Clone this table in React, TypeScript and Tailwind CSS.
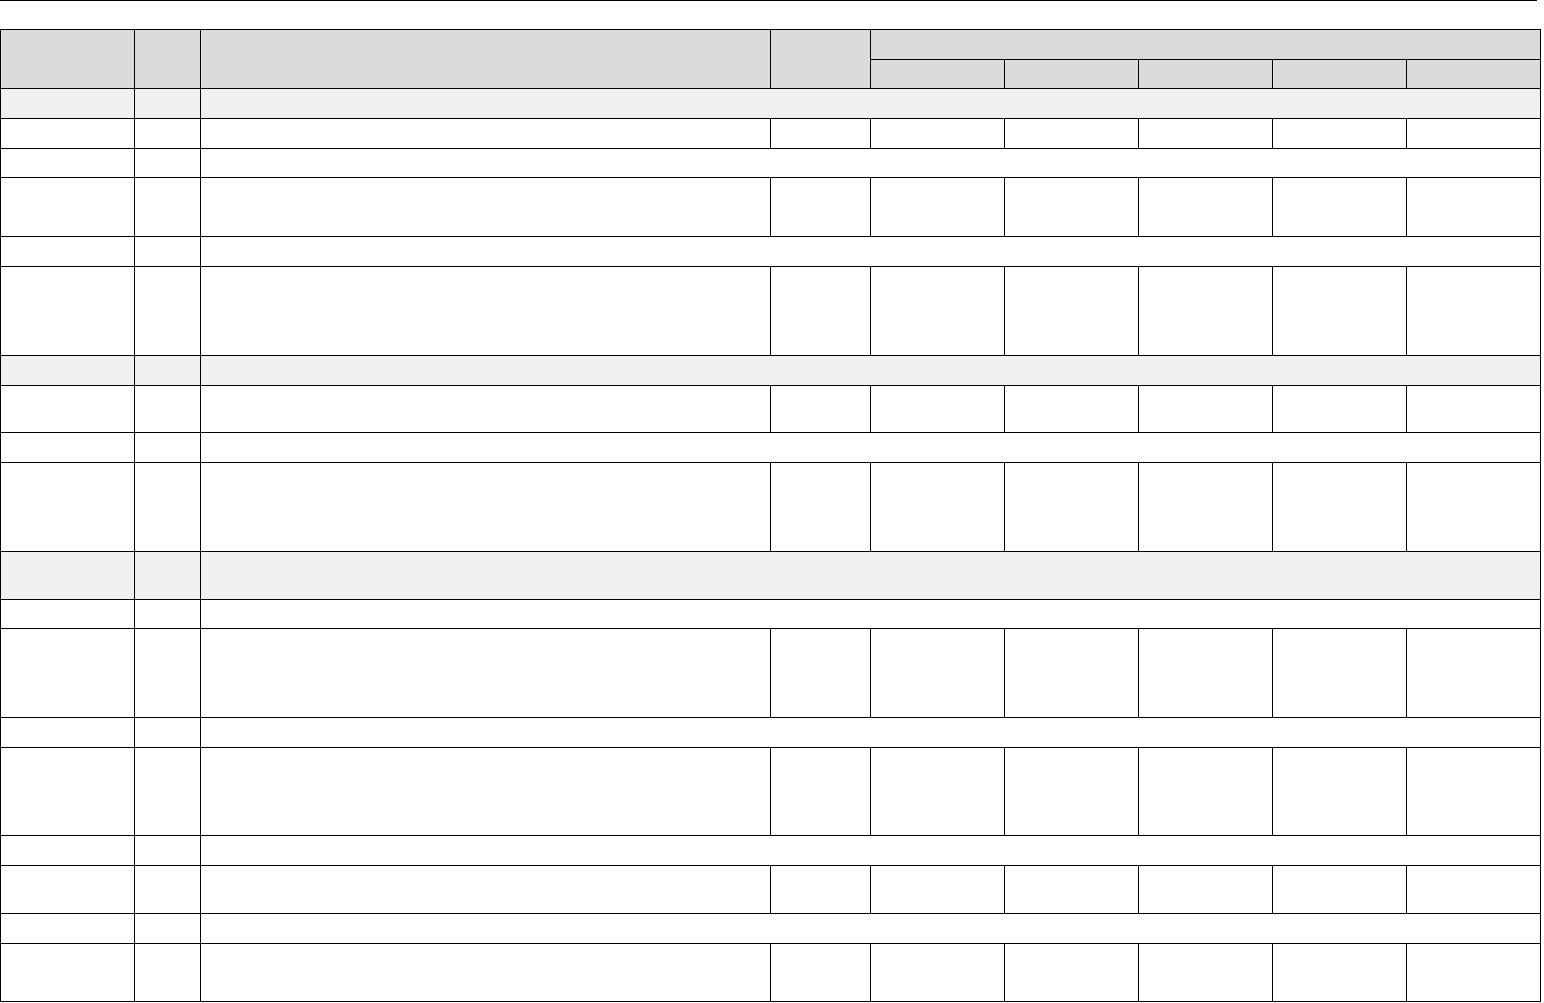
import React from "react";

type Row = { kind: "section" | "sub" | "data"; h: number };

const rows: Row[] = [
  { kind: "section", h: 29 },
  { kind: "data", h: 29 },
  { kind: "sub", h: 28 },
  { kind: "data", h: 58 },
  { kind: "sub", h: 29 },
  { kind: "data", h: 88 },
  { kind: "section", h: 29 },
  { kind: "data", h: 46 },
  { kind: "sub", h: 29 },
  { kind: "data", h: 88 },
  { kind: "section", h: 47 },
  { kind: "sub", h: 28 },
  { kind: "data", h: 88 },
  { kind: "sub", h: 29 },
  { kind: "data", h: 87 },
  { kind: "sub", h: 29 },
  { kind: "data", h: 47 },
  { kind: "sub", h: 29 },
  { kind: "data", h: 57 },
];

export default function App() {
  const rowTemplate = ["29px", "28px", ...rows.map((r) => `${r.h}px`)].join(" ");
  return (
    <div className="bg-white min-h-screen w-[1544px] font-['Liberation_Sans',sans-serif] text-sm text-black">
      <div className="w-[1537px] border-t border-black h-[29px]" />
      <div
        className="grid w-[1541px] gap-px bg-black p-px grid-cols-[133px_65px_569px_99px_133px_133px_133px_133px_133px]"
        style={{ gridTemplateRows: rowTemplate }}
      >
        <div className="row-span-2 bg-[#dbdbdb]" />
        <div className="row-span-2 bg-[#dbdbdb]" />
        <div className="row-span-2 bg-[#dbdbdb]" />
        <div className="row-span-2 bg-[#dbdbdb]" />
        <div className="col-span-5 bg-[#dbdbdb]" />
        <div className="bg-[#dbdbdb]" />
        <div className="bg-[#dbdbdb]" />
        <div className="bg-[#dbdbdb]" />
        <div className="bg-[#dbdbdb]" />
        <div className="bg-[#dbdbdb]" />
        {rows.map((r, i) => {
          if (r.kind === "data") {
            return (
              <React.Fragment key={i}>
                {Array.from({ length: 9 }).map((_, j) => (
                  <div key={j} className="bg-white" />
                ))}
              </React.Fragment>
            );
          }
          const bg = r.kind === "section" ? "bg-[#f0f0f0]" : "bg-white";
          return (
            <React.Fragment key={i}>
              <div className={bg} />
              <div className={bg} />
              <div className={`col-span-7 ${bg}`} />
            </React.Fragment>
          );
        })}
      </div>
    </div>
  );
}
